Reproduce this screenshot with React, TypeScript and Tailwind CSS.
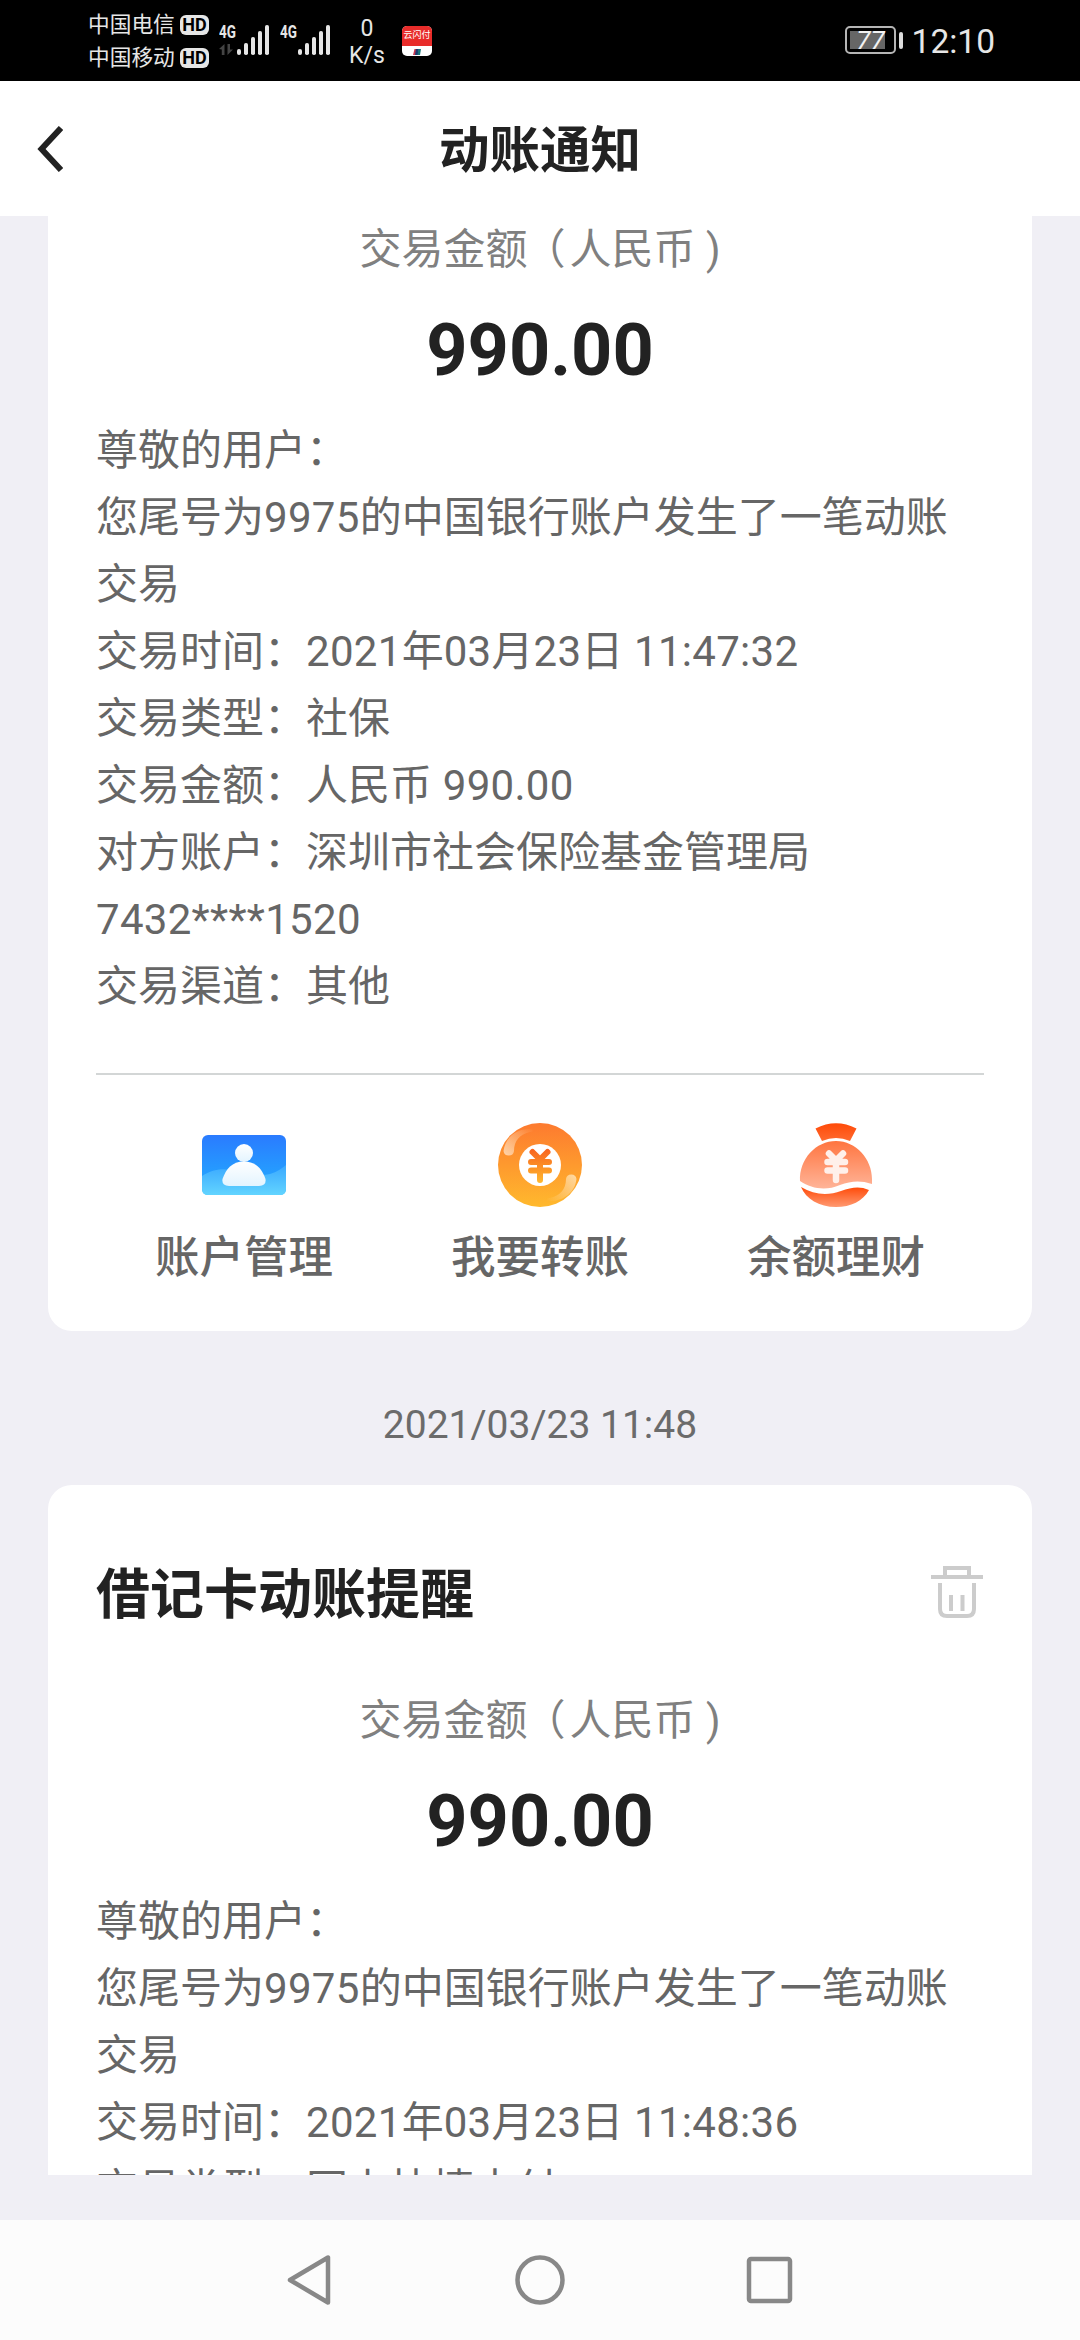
import type { ReactNode } from "react";

interface NoticeProps {
  title?: string;
  amount: string;
  lines: string[];
  children?: ReactNode;
}

const firstLines = [
  "尊敬的用户：",
  "您尾号为9975的中国银行账户发生了一笔动账",
  "交易",
  "交易时间：2021年03月23日 11:47:32",
  "交易类型：社保",
  "交易金额：人民币 990.00",
  "对方账户：深圳市社会保险基金管理局",
  "7432****1520",
  "交易渠道：其他",
];

const secondLines = [
  "尊敬的用户：",
  "您尾号为9975的中国银行账户发生了一笔动账",
  "交易",
  "交易时间：2021年03月23日 11:48:36",
  "交易类型：网上快捷支付",
];

function Signal() {
  return (
    <svg className="w-8 h-8" viewBox="0 0 32 32" fill="#e6e6e6">
      <rect x="0" y="25" width="4" height="6" rx="2" />
      <rect x="7" y="19" width="4" height="12" rx="1.8" />
      <rect x="14" y="13" width="4" height="18" rx="1.8" />
      <rect x="21" y="7" width="4" height="24" rx="1.8" />
      <rect x="28" y="1" width="4" height="30" rx="1.8" />
    </svg>
  );
}

function Carrier({ name }: { name: string }) {
  return (
    <div className="flex flex-row items-center h-[33px]">
      <span className="text-[21.7px] leading-[33px] w-[92px] whitespace-nowrap">
        {name}
      </span>
      <span className="w-[29px] h-5 rounded-[6px] bg-[#e6e6e6] text-black text-[18px] leading-5 font-bold text-center">
        HD
      </span>
    </div>
  );
}

function DataArrows() {
  return (
    <svg className="w-[14px] h-[11px]" viewBox="0 0 14 11" fill="#444">
      <path d="M0 5L5.500 0V11H2.800V5.500zM8.500 0H11V5.500H14L8.500 11z" />
    </svg>
  );
}

function StatusBar() {
  return (
    <header className="h-[81px] shrink-0 bg-black text-[#e6e6e6] flex flex-row justify-between">
      <div className="flex flex-row pl-[88px] pt-2">
        <div className="flex flex-col w-[131px]">
          <Carrier name="中国电信" />
          <Carrier name="中国移动" />
        </div>
        <div className="flex flex-row pt-4">
          <div className="flex flex-col w-[18px]">
            <span className="text-[18px] leading-[15px] font-bold origin-left scale-x-75">
              4G
            </span>
            <div className="pt-[5px]">
              <DataArrows />
            </div>
          </div>
          <Signal />
          <div className="w-[18px] ml-[11px] flex flex-col">
            <span className="text-[18px] leading-[15px] font-bold origin-left scale-x-75">
              4G
            </span>
          </div>
          <Signal />
        </div>
        <div className="w-[72px] pl-0.5 text-center text-[23px] leading-[27px] pt-[7px]">
          <div>0</div>
          <div>K/s</div>
        </div>
        <div className="pt-[18px]">
          <div className="w-[30px] h-[30px] rounded-[5px] overflow-hidden bg-white flex flex-col items-center">
            <div className="w-full h-[20px] bg-[#e82c2a] text-white text-[9px] leading-[18px] text-center whitespace-nowrap">
              云闪付
            </div>
            <svg className="w-[8px] h-[6px] mt-[3px]" viewBox="0 0 8 6">
              <path d="M1.500 0H4L3 6H0z" fill="#c6384f" />
              <path d="M3 0H6L5 6H2z" fill="#1c3f74" />
              <path d="M5.500 0H8L7 6H4.500z" fill="#17777a" />
            </svg>
          </div>
        </div>
      </div>
      <div className="flex flex-row pr-[85px] pt-[26px]">
        <div className="w-[51px] h-7 rounded-[5px] border-2 border-[#b5b5b5] p-[3px]">
          <div className="w-[35px] h-full bg-[#666] text-[#f2f2f2] text-[26px] leading-[18px] italic flex justify-end">
            <span>77</span>
          </div>
        </div>
        <div className="w-1 h-[17px] rounded-[2px] bg-[#dcdcdc] ml-[3px] mt-[6px]" />
        <span className="text-[33.500px] leading-[31px] ml-[9px]">12:10</span>
      </div>
    </header>
  );
}

function TrashIcon() {
  return (
    <svg
      className="w-[52px] h-[52px] mb-2"
      viewBox="0 0 52 52"
      fill="none"
      stroke="#ccc"
      strokeWidth="4"
    >
      <path d="M0 11H52M14 11V2H38V11M9 17V43Q9 50 16 50H36Q43 50 43 43V17M20 29V45M31.500 29V45" />
    </svg>
  );
}

function AccountIcon() {
  return (
    <svg className="w-[84px] h-[84px]" viewBox="0 0 84 84">
      <defs>
        <linearGradient id="accBg" x1="0" y1="0" x2="0" y2="1">
          <stop offset="0" stopColor="#2a7bff" />
          <stop offset="1" stopColor="#22b0ff" />
        </linearGradient>
        <linearGradient id="accWave" x1="0" y1="0" x2="0" y2="1">
          <stop offset="0" stopColor="#3aa8ff" />
          <stop offset="1" stopColor="#62d4ff" />
        </linearGradient>
        <linearGradient id="accMan" x1="0" y1="0" x2="0" y2="1">
          <stop offset="0" stopColor="#ffffff" />
          <stop offset="1" stopColor="#e3f4ff" />
        </linearGradient>
      </defs>
      <rect y="12" width="84" height="60" rx="6" fill="url(#accBg)" />
      <path
        d="M0 53C8 48 18 45 28 47C44 50 56 54 68 51C75 49 80 45 84 42V66Q84 72 78 72H6Q0 72 0 66Z"
        fill="url(#accWave)"
      />
      <circle cx="42" cy="30" r="9" fill="url(#accMan)" />
      <path
        d="M42 38.500C54 38.500 60 46 63.500 56Q64.500 63 57 63H27Q19.500 63 20.500 56C24 46 30 38.500 42 38.500Z"
        fill="url(#accMan)"
      />
    </svg>
  );
}

function CoinIcon() {
  return (
    <svg className="w-[84px] h-[84px]" viewBox="0 0 84 84">
      <defs>
        <linearGradient id="coinBg" x1="0" y1="0" x2="0" y2="1">
          <stop offset="0" stopColor="#fd7a2f" />
          <stop offset="1" stopColor="#ffb92d" />
        </linearGradient>
        <linearGradient
          id="coinYen"
          gradientUnits="userSpaceOnUse"
          x1="0"
          y1="26"
          x2="0"
          y2="60"
        >
          <stop offset="0" stopColor="#f8641f" />
          <stop offset="1" stopColor="#ffb92d" />
        </linearGradient>
        <linearGradient id="coinShineA" x1="0" y1="1" x2="1" y2="0">
          <stop offset="0" stopColor="#ffd3ab" />
          <stop offset="1" stopColor="#ffd3ab" stopOpacity="0" />
        </linearGradient>
        <linearGradient id="coinShineB" x1="1" y1="0" x2="0" y2="1">
          <stop offset="0" stopColor="#ffdba4" />
          <stop offset="1" stopColor="#ffdba4" stopOpacity="0" />
        </linearGradient>
      </defs>
      <circle cx="42" cy="42" r="42" fill="url(#coinBg)" />
      <path
        d="M5.500 28C7 15 18 5 34 6C36 7 35 9 32 9C22 11 16 18 16 28A5.300 5.300 0 0 1 5.500 28Z"
        fill="url(#coinShineA)"
      />
      <path
        d="M78.500 56C77 69 66 79 50 78C48 77 49 75 52 75C62 73 68 66 68 56A5.300 5.300 0 0 1 78.500 56Z"
        fill="url(#coinShineB)"
      />
      <circle cx="42" cy="42" r="21" fill="#fff" />
      <path
        d="M34.500 29L42 36.500L49.500 29M33 39H51M33 47.500H51M42 38V57"
        fill="none"
        stroke="url(#coinYen)"
        strokeWidth="6"
        strokeLinecap="round"
      />
    </svg>
  );
}

function BagIcon() {
  return (
    <svg className="w-[84px] h-[84px]" viewBox="0 0 84 84">
      <defs>
        <linearGradient id="bagTop" x1="0" y1="0" x2="0" y2="1">
          <stop offset="0" stopColor="#ff4a08" />
          <stop offset="1" stopColor="#ff6a2f" />
        </linearGradient>
        <linearGradient id="bagBody" x1="0" y1="0" x2="0" y2="1">
          <stop offset="0" stopColor="#ff7540" />
          <stop offset="1" stopColor="#ffb498" />
        </linearGradient>
        <linearGradient id="bagBottom" x1="0" y1="0" x2="0" y2="1">
          <stop offset="0" stopColor="#ff4a08" />
          <stop offset="1" stopColor="#ff9a72" />
        </linearGradient>
      </defs>
      <path d="M21.500 5.500Q42 -5 62.500 5.500L56 18Q42 12 28 18Z" fill="url(#bagTop)" />
      <path
        d="M42 18C62 18 78 36 78 56V61C66 57 57 58 46 62C32 68 18 66 6 58C5 36 22 18 42 18Z"
        fill="url(#bagBody)"
      />
      <path
        d="M7 64C20 72 34 73 47 68C58 64 66 63 75 67C69 78 57 84 42 84C25 84 12 76 7 64Z"
        fill="url(#bagBottom)"
      />
      <path
        d="M35 30.500L42 37.500L49 30.500M33.500 39H51M33.500 47.500H51M42 38V57"
        fill="none"
        stroke="#fff0ea"
        strokeWidth="6.500"
        strokeLinecap="round"
      />
    </svg>
  );
}

// digits are set a little looser than the Chinese text around them
function Line({ text }: { text: string }) {
  return (
    <p>
      {text.split(/([\d.*: ]+)/).map((part, index) =>
        index % 2 === 1 ? (
          <span className="tracking-[0.3px]" key={index}>
            {part}
          </span>
        ) : (
          part
        )
      )}
    </p>
  );
}

function Notice(props: NoticeProps) {
  const { title, amount, lines, children } = props;

  return (
    <section className="bg-white px-12">
      {title && (
        <div className="flex flex-row items-center justify-between pt-[69px] pr-px">
          <h2 className="text-[54px] leading-[84px] font-bold text-[#222]">
            {title}
          </h2>
          <TrashIcon />
        </div>
      )}
      <div
        className={`${
          title ? "pt-[51px]" : "pt-0.5"
        } text-[42px] leading-[64px] text-[#808080] text-center`}
      >
        交易金额<span className="-ml-1 mr-1">（</span>人民币 )
      </div>
      <div className="mt-[19px] text-[72px] leading-[100px] h-[100px] font-bold text-[#222] text-center">
        {amount}
      </div>
      <div className="mt-4 text-[42px] leading-[67px] text-[#666] whitespace-nowrap">
        {lines.map((line, index) => (
          <Line text={line} key={index} />
        ))}
      </div>
      {children}
    </section>
  );
}

const actions = [
  { label: "账户管理", icon: <AccountIcon /> },
  { label: "我要转账", icon: <CoinIcon /> },
  { label: "余额理财", icon: <BagIcon /> },
];

export default function App() {
  return (
    <div className="w-[1080px] h-[2340px] flex flex-col overflow-hidden bg-[#f0eff5] font-[Roboto,'Noto_Sans_CJK_SC',sans-serif]">
      <StatusBar />
      <div className="h-[135px] shrink-0 bg-white grid grid-cols-3 items-center">
        <svg
          className="w-[26px] h-[46px] ml-[37px]"
          viewBox="0 0 26 46"
          fill="none"
          stroke="#222"
          strokeWidth="6"
        >
          <path d="M24 2L4.500 23L24 44" />
        </svg>
        <h1 className="pt-[5px] text-[50.500px] leading-[74px] font-bold text-[#222] text-center">
          动账通知
        </h1>
      </div>
      <main className="h-[1959px] shrink-0 px-12 overflow-hidden">
        <div className="h-[1115px] rounded-b-3xl overflow-hidden bg-white">
          <Notice amount="990.00" lines={firstLines}>
            <div className="mt-[53px] border-t-2 border-[#d3d6d6] grid grid-cols-3">
              {actions.map((action) => (
                <div
                  className="flex flex-col items-center pt-12"
                  key={action.label}
                >
                  {action.icon}
                  <span className="mt-[18px] text-[44.500px] leading-[66px] font-medium text-[#666]">
                    {action.label}
                  </span>
                </div>
              ))}
            </div>
          </Notice>
        </div>
        <div className="h-[154px] pt-[34px] text-[39px] leading-[120px] text-[#6b6b6b] text-center">
          2021/03/23 11:48
        </div>
        <div className="rounded-t-3xl overflow-hidden bg-white">
          <Notice
            title="借记卡动账提醒"
            amount="990.00"
            lines={secondLines}
          />
        </div>
      </main>
      <nav className="mt-auto h-[120px] shrink-0 bg-[#fcfcfc] flex flex-row justify-center items-center">
        <svg
          className="w-[508px] h-[52px]"
          viewBox="0 0 508 52"
          fill="none"
          stroke="#888"
          strokeWidth="4.500"
          strokeLinejoin="round"
        >
          <path d="M4 26L42 3.500V48.500Z" />
          <circle cx="254" cy="26" r="22.500" />
          <rect x="463" y="5" width="41" height="42" rx="2" />
        </svg>
      </nav>
    </div>
  );
}
